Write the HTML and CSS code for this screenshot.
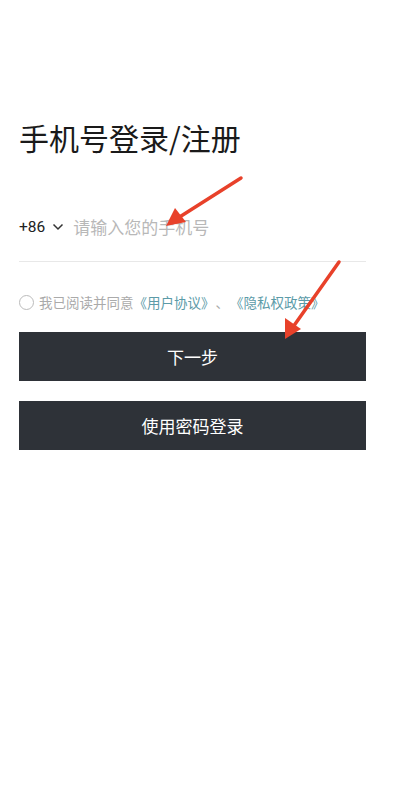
FILE: index.html
```html
<!DOCTYPE html>
<html lang="zh-CN">
<head>
    <meta charset="UTF-8">
    <meta name="viewport" content="width=device-width, initial-scale=1.0">
    <title>手机号登录/注册</title>
    <link rel="stylesheet" href="styles.css">
</head>
<body>
    <div class="page">
        <h1 class="title">手机号登录/注册</h1>

        <div class="phone-row">
            <span class="code">+86</span>
            <svg class="chevron" width="12" height="8" viewBox="0 0 12 8">
                <path d="M1.5 1.5 L6 6 L10.5 1.5" fill="none" stroke="#333" stroke-width="1.5"/>
            </svg>
            <input class="phone-input" type="text" placeholder="请输入您的手机号">
        </div>

        <div class="agree">
            <span class="radio"></span>
            <span>我已阅读并同意</span><a href="#">《用户协议》</a><span class="sep">、</span><a href="#">《隐私权政策》</a>
        </div>

        <button class="btn">下一步</button>
        <button class="btn">使用密码登录</button>
    </div>

    <!-- annotation arrows over the screenshot -->
    <svg class="arrows" width="394" height="792" viewBox="0 0 394 792">
        <line x1="241" y1="178" x2="178" y2="218" stroke="#e8412a" stroke-width="3.5" stroke-linecap="round"/>
        <polygon points="166,226 175,208 186,222" fill="#e8412a"/>
        <line x1="339" y1="262" x2="293" y2="327" stroke="#e8412a" stroke-width="3.5" stroke-linecap="round"/>
        <polygon points="285,339 285,318 301,329" fill="#e8412a"/>
    </svg>
</body>
</html>
```

FILE: styles.css
```css
* {
    margin: 0;
    padding: 0;
    box-sizing: border-box;
}

body {
    font-family: "Noto Sans CJK SC", "Noto Sans", sans-serif;
    background: #fff;
    width: 394px;
    height: 792px;
    position: relative;
    overflow: hidden;
}

.page {
    padding: 114px 28px 0 19px;
    display: flex;
    flex-direction: column;
}

.title {
    font-size: 30px;
    font-weight: 400;
    color: #1a1a1a;
    line-height: 46px;
}

.phone-row {
    margin-top: 42px;
    height: 60px;
    display: flex;
    align-items: center;
    border-bottom: 1px solid #e8e8e8;
    padding-bottom: 10px;
}

.code {
    font-family: Roboto, "Noto Sans", sans-serif;
    font-size: 15.5px;
    color: #222;
}

.chevron {
    margin-left: 7px;
}

.phone-input {
    margin-left: 9px;
    border: none;
    outline: none;
    font-family: "Noto Sans CJK SC", sans-serif;
    font-size: 17px;
    color: #333;
    flex: 1;
    background: transparent;
}

.phone-input::placeholder {
    color: #b8b8b8;
}

.agree {
    margin-top: 22px;
    height: 36px;
    display: flex;
    align-items: center;
    font-size: 13.5px;
    color: #aaa;
}

.radio {
    width: 15px;
    height: 15px;
    border: 1.5px solid #bbb;
    border-radius: 50%;
    margin-right: 5px;
}

.agree a {
    color: #5c9ba8;
    text-decoration: none;
}

.sep {
    margin: 0 1px;
}

.btn {
    margin-top: 12px;
    height: 49px;
    background: #2e3238;
    color: #fff;
    border: none;
    font-family: "Noto Sans CJK SC", sans-serif;
    font-size: 17px;
    font-weight: 400;
}

.btn + .btn {
    margin-top: 20px;
}

.arrows {
    position: absolute;
    top: 0;
    left: 0;
    pointer-events: none;
}
```
